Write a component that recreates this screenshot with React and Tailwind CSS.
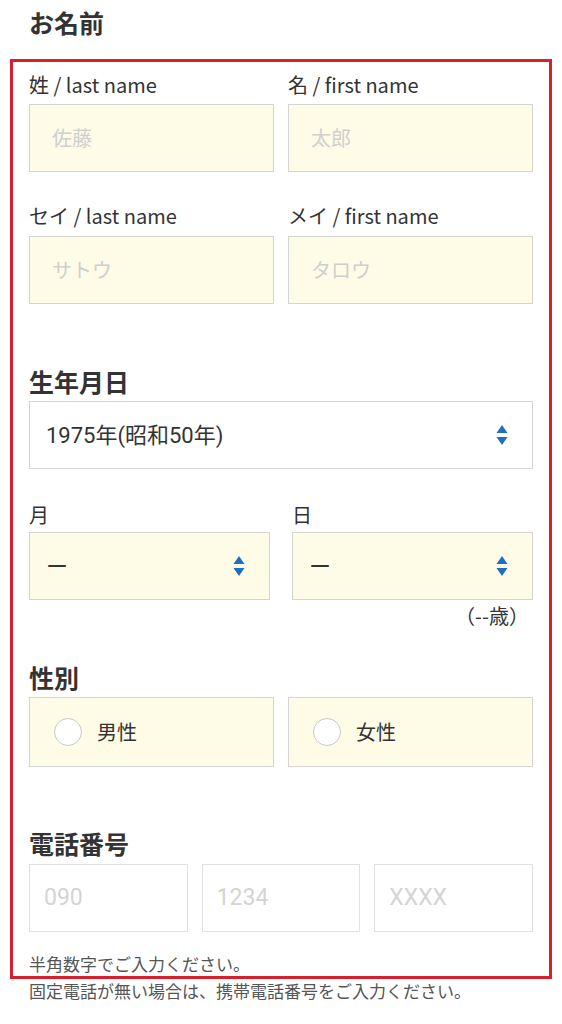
import React from "react";

const Arrows = () => (
    <svg width="12" height="22" viewBox="0 0 12 22" className="shrink-0">
        <path d="M6 1 L11.5 9 L0.5 9 Z" fill="#1e6fc0" />
        <path d="M6 21 L11.5 13 L0.5 13 Z" fill="#1e6fc0" />
    </svg>
);

const TextBox = ({ placeholder }) => (
    <div className="h-[68px] flex-1 border border-[#d4d4d0] bg-[#fefce6] flex items-center pl-[22px] text-[20px] text-[#cfcfcf]">
        {placeholder}
    </div>
);

const Label = ({ children, className = "" }) => (
    <div className={"text-[20px] leading-[28px] text-[#333] " + className}>{children}</div>
);

const Heading = ({ children, className = "" }) => (
    <h2 className={"text-[25px] leading-[34px] font-bold text-[#333] " + className}>{children}</h2>
);

const Radio = ({ label }) => (
    <div className="h-[70px] flex-1 border border-[#d4d4d0] bg-[#fefce6] flex items-center pl-[24px] gap-[15px]">
        <span className="w-[28px] h-[28px] rounded-full border border-[#c8c8c8] bg-white"></span>
        <span className="text-[20px] text-[#333]">{label}</span>
    </div>
);

const PhoneBox = ({ placeholder }) => (
    <div className="h-[68px] flex-1 border border-[#e0e0e0] bg-white flex items-center pl-[14px] text-[23px] text-[#d4d4d4] font-['Roboto',sans-serif]">
        {placeholder}
    </div>
);

const SelectBox = ({ value, yellow }) => (
    <div
        className={
            "h-[68px] border flex items-center justify-between pl-[16px] pr-[24px] " +
            (yellow ? "border-[#d4d4d0] bg-[#fefce6]" : "border-[#d4d4d4] bg-white")
        }
    >
        <span className="text-[22px] text-[#333] font-['Roboto','Noto_Sans_CJK_JP',sans-serif]">{value}</span>
        <Arrows />
    </div>
);

export default function App() {
    return (
        <div className="relative w-[562px] h-[1024px] bg-white overflow-hidden font-['Noto_Sans_CJK_JP','Noto_Sans',sans-serif]">
            <div className="px-[29px] pt-[5px]">
                <Heading>お名前</Heading>

                <div className="flex gap-[14px] mt-[32px]">
                    <div className="flex-1 flex flex-col">
                        <Label>姓 / last name</Label>
                        <div className="mt-[5px] flex"><TextBox placeholder="佐藤" /></div>
                    </div>
                    <div className="flex-1 flex flex-col">
                        <Label>名 / first name</Label>
                        <div className="mt-[5px] flex"><TextBox placeholder="太郎" /></div>
                    </div>
                </div>

                <div className="flex gap-[14px] mt-[30px]">
                    <div className="flex-1 flex flex-col">
                        <Label>セイ / last name</Label>
                        <div className="mt-[6px] flex"><TextBox placeholder="サトウ" /></div>
                    </div>
                    <div className="flex-1 flex flex-col">
                        <Label>メイ / first name</Label>
                        <div className="mt-[6px] flex"><TextBox placeholder="タロウ" /></div>
                    </div>
                </div>

                <Heading className="mt-[60px]">生年月日</Heading>
                <div className="mt-[3px]">
                    <SelectBox value="1975年(昭和50年)" />
                </div>

                <div className="flex gap-[22px] mt-[32px]">
                    <div className="flex-1 flex flex-col">
                        <Label>月</Label>
                        <div className="mt-[3px]"><SelectBox value="ー" yellow /></div>
                    </div>
                    <div className="flex-1 flex flex-col">
                        <Label>日</Label>
                        <div className="mt-[3px]"><SelectBox value="ー" yellow /></div>
                    </div>
                </div>
                <div className="mt-[4px] text-right pr-[4px] text-[20px] leading-[24px] text-[#333]">（--歳）</div>

                <Heading className="mt-[32px]">性別</Heading>
                <div className="flex gap-[14px] mt-[3px]">
                    <Radio label="男性" />
                    <Radio label="女性" />
                </div>

                <Heading className="mt-[59px]">電話番号</Heading>
                <div className="flex gap-[14px] mt-[4px]">
                    <PhoneBox placeholder="090" />
                    <PhoneBox placeholder="1234" />
                    <PhoneBox placeholder="XXXX" />
                </div>

                <div className="mt-[18px] text-[17px] leading-[27px] text-[#555]">
                    <p>半角数字でご入力ください。</p>
                    <p>固定電話が無い場合は、携帯電話番号をご入力ください。</p>
                </div>
            </div>

            <div className="absolute left-[10px] top-[59px] w-[542px] h-[920px] border-[3px] border-[#d7202b] pointer-events-none"></div>
        </div>
    );
}
